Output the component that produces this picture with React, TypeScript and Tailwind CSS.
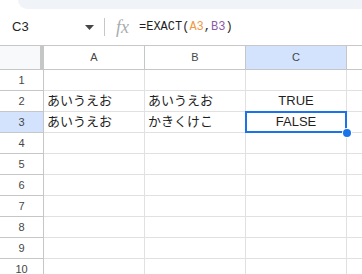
import React from 'react';

const cols = ['A', 'B', 'C'];
const rows: Record<number, string[]> = {
  2: ['あいうえお', 'あいうえお', 'TRUE'],
  3: ['あいうえお', 'かきくけこ', 'FALSE'],
};

const sans = "font-['Liberation_Sans','Noto_Sans_CJK_JP',sans-serif]";

export default function App() {
  return (
    <div className={`w-[362px] h-[274px] overflow-hidden bg-white ${sans}`}>
      {/* top toolbar edge */}
      <div className="ml-[18px] h-[9px] bg-[#f0f4f9] rounded-bl-[14px]" />

      {/* ── Formula bar ─────────────────────────────────────── */}
      <div className="h-[37px] flex items-center border-b border-[#c7c7c7]">
        <div className="w-[104px] flex items-center pl-[12px] pr-[10px]">
          <span className="text-[13px] text-[#1f1f1f]">C3</span>
          <svg className="ml-auto" width="9" height="5" viewBox="0 0 9 5">
            <polygon points="0,0 9,0 4.5,5" fill="#444746" />
          </svg>
        </div>
        <div className="w-px h-[18px] bg-[#c7c7c7]" />
        <span className="ml-[11px] w-[21px] font-['Liberation_Serif',serif] italic text-[18px] text-[#a8acb0] leading-none">
          fx
        </span>
        <span className="ml-[2px] font-['Liberation_Mono',monospace] text-[12px] text-[#1f1f1f]">
          =EXACT(<span className="text-[#f09a48]">A3</span>,<span className="text-[#8d5aa8]">B3</span>)
        </span>
      </div>

      {/* ── Grid ────────────────────────────────────────────── */}
      <div className="grid grid-cols-[44px_101px_101px_101px_1fr]">
        {/* header row */}
        <div className="h-[24px] bg-[#f8f9fa] border-r-[4px] border-b-[1px] border-[#c4c7c5]" />
        {cols.map((c) => (
          <div
            key={c}
            className={`h-[24px] flex items-center justify-center text-[11px] text-[#444746] border-r border-b border-[#c4c7c5] ${
              c === 'C' ? 'bg-[#d3e3fd]' : 'bg-white'
            }`}
          >
            {c}
          </div>
        ))}
        <div className="h-[24px] border-b border-[#c4c7c5]" />

        {Array.from({ length: 10 }, (_, i) => i + 1).map((r) => (
          <React.Fragment key={r}>
            <div
              className={`h-[21px] flex items-center justify-center text-[11px] text-[#444746] border-r border-b border-[#c4c7c5] ${
                r === 3 ? 'bg-[#d3e3fd]' : 'bg-white'
              }`}
            >
              {r}
            </div>
            {cols.map((c, ci) => {
              const v = rows[r]?.[ci];
              const isSel = r === 3 && c === 'C';
              return (
                <div
                  key={c}
                  className={`relative h-[21px] flex items-center px-[3px] text-[13px] text-[#1f1f1f] border-r border-b border-[#e1e1e1] ${
                    c === 'C' ? 'justify-center' : ''
                  }`}
                >
                  {v}
                  {isSel && (
                    <>
                      <div className="absolute -left-[1px] -top-[1px] -right-[1px] -bottom-[1px] z-10 border-2 border-[#1a73e8]" />
                      <div className="absolute -right-[5px] -bottom-[5px] z-20 w-[8px] h-[8px] rounded-full bg-[#1a73e8] ring-1 ring-white" />
                    </>
                  )}
                </div>
              );
            })}
            <div className="h-[21px] border-b border-[#e1e1e1]" />
          </React.Fragment>
        ))}
      </div>
    </div>
  );
}
